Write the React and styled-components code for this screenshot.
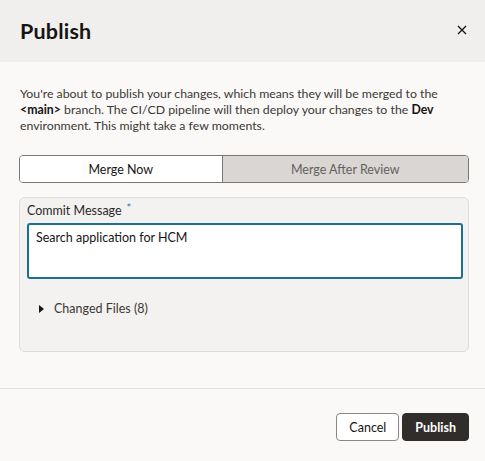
import React from "react";
import styled, { createGlobalStyle } from "styled-components";

const GlobalStyle = createGlobalStyle`
  html, body { margin: 0; padding: 0; background: #faf9f8; }
  body { font-family: Lato, "Noto Sans", sans-serif; color: #161513; }
  * { box-sizing: border-box; }
`;

const Dialog = styled.div`
  width: 485px;
  height: 461px;
  display: flex;
  flex-direction: column;
  background: #faf9f8;
`;

const Header = styled.header`
  height: 62px;
  flex: none;
  background: #f1efed;
  display: flex;
  align-items: center;
  justify-content: space-between;
  padding: 0 16px 0 20px;
`;

const Title = styled.h1`
  margin: 0;
  font-size: 21.5px;
  font-weight: 700;
  color: #161513;
  letter-spacing: 0.2px;
`;

const CloseButton = styled.button`
  border: none;
  background: transparent;
  padding: 0;
  width: 14px;
  height: 14px;
  display: flex;
  align-items: center;
  justify-content: center;
  margin-top: -3px;
  cursor: pointer;
`;

const Body = styled.div`
  flex: 1;
  padding: 24px 16px 0 19px;
  display: flex;
  flex-direction: column;
`;

const Intro = styled.p`
  margin: 0 0 0 1px;
  font-size: 12.3px;
  line-height: 16px;
  color: #3b3835;
`;

const Strong = styled.b`
  font-weight: 700;
  color: #161513;
`;

const Segmented = styled.div`
  margin-top: 21px;
  display: flex;
  height: 28px;
  border: 1px solid #7a7672;
  border-radius: 4px;
  overflow: hidden;
`;

const Segment = styled.button`
  flex: 1 1 auto;
  border: none;
  border-left: ${(p) => (p.$first ? "none" : "1px solid #7a7672")};
  background: ${(p) => (p.$active ? "#ffffff" : "#d9d6d3")};
  color: ${(p) => (p.$active ? "#161513" : "#65615d")};
  font-family: inherit;
  font-size: 12.5px;
  padding: 0;
  cursor: pointer;
`;

const Panel = styled.section`
  margin-top: 14px;
  height: 155px;
  background: #f3f2f0;
  border: 1px solid #dfdcd9;
  border-radius: 6px;
  padding: 5px 5px 0 7px;
  display: flex;
  flex-direction: column;
`;

const Label = styled.label`
  font-size: 12.5px;
  line-height: 16px;
  color: #2a2826;
  display: flex;
  align-items: flex-start;
`;

const Required = styled.span`
  color: #2b7ea7;
  font-size: 11px;
  line-height: 10px;
  margin-left: 5px;
`;

const TextArea = styled.textarea`
  margin-top: 4px;
  height: 56px;
  width: 100%;
  resize: none;
  border: 2px solid #1b6f8f;
  border-radius: 3px;
  background: #ffffff;
  font-family: inherit;
  font-size: 12.5px;
  line-height: 16px;
  color: #161513;
  padding: 5px 7px;
  outline: none;
`;

const Disclosure = styled.div`
  margin-top: 22px;
  margin-left: 12px;
  display: flex;
  align-items: center;
  gap: 10px;
  font-size: 12.5px;
  color: #3b3835;
`;

const Separator = styled.hr`
  margin: 36px 0 0;
  border: none;
  border-top: 1px solid #e4e1de;
  height: 0;
`;

const Footer = styled.footer`
  display: flex;
  justify-content: flex-end;
  gap: 3px;
  padding: 24px 16px 0 0;
`;

const Button = styled.button`
  height: 28px;
  border-radius: 4px;
  font-family: inherit;
  font-size: 12.5px;
  padding: 0 12px;
  border: 1px solid ${(p) => (p.$primary ? "#312d2a" : "#8c8783")};
  background: ${(p) => (p.$primary ? "#312d2a" : "#ffffff")};
  color: ${(p) => (p.$primary ? "#ffffff" : "#161513")};
  font-weight: ${(p) => (p.$primary ? 700 : 400)};
  cursor: pointer;
`;

const FooterSpacer = styled.div`
  flex: 1;
`;

export default function App() {
  return (
    <>
      <GlobalStyle />
      <Dialog>
        <Header>
          <Title>Publish</Title>
          <CloseButton aria-label="Close">
            <svg width="10" height="10" viewBox="0 0 10 10">
              <path d="M1 1L9 9M9 1L1 9" stroke="#161513" strokeWidth="1.3" />
            </svg>
          </CloseButton>
        </Header>
        <Body>
          <Intro>
            You're about to publish your changes, which means they will be merged to the
            <br />
            <Strong>&lt;main&gt;</Strong> branch. The CI/CD pipeline will then deploy your changes to the <Strong>Dev</Strong>
            <br />
            environment. This might take a few moments.
          </Intro>
          <Segmented>
            <Segment $first $active>Merge Now</Segment>
            <Segment>Merge After Review</Segment>
          </Segmented>
          <Panel>
            <Label>
              Commit Message<Required>*</Required>
            </Label>
            <TextArea defaultValue="Search application for HCM" />
            <Disclosure>
              <svg width="5" height="8" viewBox="0 0 5 8">
                <path d="M0 0L5 4L0 8Z" fill="#161513" />
              </svg>
              Changed Files (8)
            </Disclosure>
          </Panel>
        </Body>
        <Separator />
        <Footer>
          <Button>Cancel</Button>
          <Button $primary>Publish</Button>
        </Footer>
        <FooterSpacer />
      </Dialog>
    </>
  );
}
